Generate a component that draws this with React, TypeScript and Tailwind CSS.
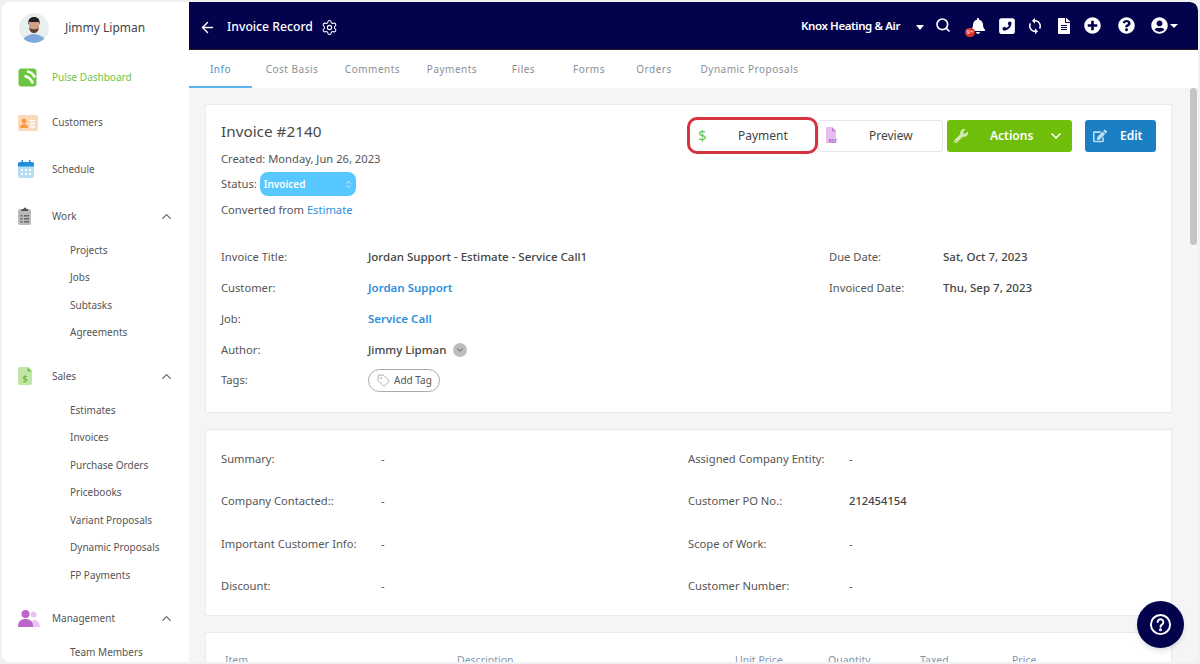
import { ArrowLeft, ChevronDown, ChevronUp, ChevronsUpDown, Search, Settings, Tag } from 'lucide-react';
import { FaBell, FaEdit, FaFileAlt, FaPlusCircle, FaQuestionCircle, FaUserCircle, FaWrench } from 'react-icons/fa';
import { FaSquarePhoneFlip } from 'react-icons/fa6';
import { MdLoop } from 'react-icons/md';

const TABS: [string, string][] = [
  ['Info', 'w-[63px]'],
  ['Cost Basis', 'w-[80px]'],
  ['Comments', 'w-[81px]'],
  ['Payments', 'w-[78px]'],
  ['Files', 'w-[65px]'],
  ['Forms', 'w-[66px]'],
  ['Orders', 'w-[64px]'],
  ['Dynamic Proposals', 'w-[127px]'],
];

function Avatar() {
  return (
    <svg width="30" height="30" viewBox="0 0 30 30" className="shrink-0 rounded-full">
      <circle cx="15" cy="15" r="15" fill="#e9eeee" />
      <path d="M3 31c1-8 6-9 12-10 6 1 11 2 12 10z" fill="#7fa9dc" />
      <ellipse cx="15" cy="13" rx="5" ry="6.500" fill="#d0a080" />
      <path d="M9.500 12c-1-6 2-8 5.500-8s6.500 2 5.500 8l-1-3c-3 0-6 0-9 0z" fill="#222" />
      <path d="M10 14c.5 4 2 6 5 6s4.500-2 5-6l-1 1.500c-2 1-6 1-8 0z" fill="#5a4030" />
    </svg>
  );
}

function PulseIcon() {
  return (
    <svg width="19" height="19" viewBox="0 0 19 19" fill="none">
      <rect width="18" height="18" x="0.500" y="0.500" rx="3" fill="#6cc644" />
      <path d="M9 3.500c3.500 0 6 2.500 8 6" stroke="#fff" strokeWidth="2.500" />
      <path d="M6.500 8c3.500.5 6.500 3 8.500 7.500" stroke="#fff" strokeWidth="2.500" />
    </svg>
  );
}

function CustomersIcon() {
  return (
    <svg width="20" height="16" viewBox="0 0 20 16">
      <rect width="20" height="16" rx="2" fill="#fcd9b8" />
      <circle cx="6" cy="6" r="2.500" fill="#f79a3e" />
      <path d="M2 13c0-3 2-4 4-4s4 1 4 4z" fill="#f79a3e" />
      <path d="M12 5h5v1.500h-5zM12 8h5v1.500h-5zM12 11h5v1.500h-5z" fill="#fff" />
    </svg>
  );
}

function ScheduleIcon() {
  return (
    <svg width="16" height="18" viewBox="0 0 16 18">
      <rect y="2" width="16" height="16" rx="2" fill="#b5def7" />
      <path d="M2 2h12a2 2 0 0 1 2 2v2.500H0V4a2 2 0 0 1 2-2z" fill="#1f8fdc" />
      <path d="M3.500 0h1.500v3H3.500zM11 0h1.500v3H11z" fill="#1f8fdc" />
      <path d="M3 9h2v2H3zM7 9h2v2H7zM11 9h2v2h-2zM3 13h2v2H3zM7 13h2v2H7zM11 13h2v2h-2z" fill="#fff" />
    </svg>
  );
}

function WorkIcon() {
  return (
    <svg width="14" height="18" viewBox="0 0 14 18">
      <rect y="2" width="13" height="16" rx="2" fill="#b9b9b9" />
      <path d="M3.500 4V2h2a1.500 1.500 0 0 1 3 0h1.500v2z" fill="#555" />
      <path d="M2.500 8h2v1.500h-2zM6 8h5v1.500H6zM2.500 11h2v1.500h-2zM6 11h5v1.500H6zM2.500 14h2v1.500h-2zM6 14h5v1.500H6z" fill="#666" />
    </svg>
  );
}

function SalesIcon() {
  return (
    <svg width="14" height="18" viewBox="0 0 14 18">
      <path d="M2 0h8l4 4.500V16a2 2 0 0 1-2 2H2a2 2 0 0 1-2-2V2a2 2 0 0 1 2-2z" fill="#bfe6a5" />
      <path d="M9.500 0 14 4.500H9.500z" fill="#6cc644" />
      <text x="7" y="15" textAnchor="middle" fontSize="9" fill="#4da82b" fontFamily="Noto Sans, sans-serif">$</text>
    </svg>
  );
}

function ManagementIcon() {
  return (
    <svg width="22" height="17" viewBox="0 0 22 17">
      <circle cx="15.500" cy="4.500" r="3" fill="#e6c6ec" />
      <path d="M12 17c0-5 2-7 4.500-7s5 2 5.500 7z" fill="#e6c6ec" />
      <circle cx="7.500" cy="4" r="4" fill="#bb66c8" />
      <path d="M0 17c0-6 3-8 7.500-8s7.500 2 7.500 8z" fill="#bb66c8" />
    </svg>
  );
}

function PdfIcon() {
  return (
    <svg width="15" height="17" viewBox="0 0 15 17">
      <path d="M1 0h6l4 4.500V16H1z" fill="#e7bdf0" />
      <path d="M7 0l4 4.500H7z" fill="#c77dd6" />
      <text x="3.500" y="15.500" fontSize="4.500" fontWeight="700" fill="#b565c7" fontFamily="Noto Sans, sans-serif">PDF</text>
    </svg>
  );
}

function NavItem({ icon, label, h, active, open }: { icon: React.ReactNode; label: string; h: string; active?: boolean; open?: boolean }) {
  return (
    <div className={`flex items-center pl-[16px] pr-[15px] ${h}`}>
      <div className="flex w-[34px] shrink-0 items-center">{icon}</div>
      <span className={`text-[10px] ${active ? 'text-[#6cc644]' : 'text-[#555]'}`}>{label}</span>
      {open && <ChevronUp size={15} className="ml-auto text-[#666]" />}
    </div>
  );
}

function SubItem({ label }: { label: string }) {
  return <div className="flex h-[27.500px] items-center pl-[68px] text-[10px] text-[#555]">{label}</div>;
}

function Sidebar() {
  return (
    <aside className="w-[187px] shrink-0 overflow-hidden bg-white">
      <div className="flex h-[52px] items-center gap-[16px] pl-[17px] text-[12px] text-[#444]">
        <Avatar />
        Jimmy Lipman
      </div>
      <NavItem icon={<PulseIcon />} label="Pulse Dashboard" h="h-[46px]" active />
      <NavItem icon={<CustomersIcon />} label="Customers" h="h-[45px]" />
      <NavItem icon={<ScheduleIcon />} label="Schedule" h="h-[48px]" />
      <NavItem icon={<WorkIcon />} label="Work" h="h-[31px] mt-[7.500px]" open />
      <div className="pt-[5px]">
        {['Projects', 'Jobs', 'Subtasks', 'Agreements'].map((s) => (
          <SubItem key={s} label={s} />
        ))}
      </div>
      <NavItem icon={<SalesIcon />} label="Sales" h="h-[31px] mt-[14px]" open />
      <div className="pt-[5px]">
        {['Estimates', 'Invoices', 'Purchase Orders', 'Pricebooks', 'Variant Proposals', 'Dynamic Proposals', 'FP Payments'].map((s) => (
          <SubItem key={s} label={s} />
        ))}
      </div>
      <NavItem icon={<ManagementIcon />} label="Management" h="h-[31px] mt-[13.500px]" open />
      <div className="pt-[5px]">
        <SubItem label="Team Members" />
      </div>
    </aside>
  );
}

function TopBar() {
  return (
    <header className="flex h-[48px] shrink-0 items-center rounded-tr-lg border-b border-[#222] bg-[#02024d] pl-[10px] pt-[2px] text-white">
      <ArrowLeft size={17} strokeWidth={2} className="mt-[1px]" />
      <span className="ml-[11px] mt-[1px] text-[12.200px] font-medium">Invoice Record</span>
      <Settings size={17} strokeWidth={1.500} className="ml-[8px] mt-[1px]" />
      <span className="ml-auto -mt-[2px] text-[11.500px] font-semibold tracking-[-0.4px]">Knox Heating &amp; Air</span>
      <span className="ml-[16px] mt-[2px] h-0 w-0 border-x-[4.500px] border-t-[5px] border-x-transparent border-t-white" />
      <Search size={16} strokeWidth={2.500} className="ml-[11px] -mt-[4px]" />
      <div className="relative ml-[19px] -mt-[2px]">
        <FaBell size={16} />
        <span className="absolute -bottom-[3px] -left-[5px] flex h-[9px] w-[10px] items-center justify-center rounded-full bg-[#d9342b] text-[6px] leading-none">9+</span>
      </div>
      <FaSquarePhoneFlip size={18} className="ml-[12px] -mt-[2px]" />
      <MdLoop size={18} className="ml-[10px] -mt-[2px]" />
      <FaFileAlt size={16} className="ml-[12px] -mt-[2px]" />
      <FaPlusCircle size={17} className="ml-[12px] -mt-[2px]" />
      <FaQuestionCircle size={17} className="ml-[17px] -mt-[2px]" />
      <FaUserCircle size={17} className="ml-[16px] -mt-[2px]" />
      <span className="ml-[2px] mr-[20px] -mt-[2px] h-0 w-0 border-x-[4px] border-t-[4px] border-x-transparent border-t-white" />
    </header>
  );
}

function Tabs() {
  return (
    <nav className="flex h-[38px] shrink-0 bg-white text-[10px] tracking-[0.5px] text-[#8a8f95]">
      {TABS.map(([t, w], i) => (
        <div
          key={t}
          className={`flex items-center justify-center border-b-[2px] pt-[2px] ${w} ${i === 0 ? 'border-[#5ab4ec] text-[#4a90c8]' : 'border-transparent'}`}
        >
          {t}
        </div>
      ))}
    </nav>
  );
}

function DetailRow({ label, value, link, w = 'w-[147px]' }: { label: string; value: React.ReactNode; link?: boolean; w?: string }) {
  return (
    <div className="flex h-[31px] items-center text-[11.200px]">
      <span className={`${w} shrink-0 text-[#555]`}>{label}</span>
      <span className={`text-[11.500px] font-medium ${link ? 'font-semibold text-[#2f8fdc]' : 'text-[#444]'}`}>{value}</span>
    </div>
  );
}

function InfoRow({ label, value, w }: { label: string; value: string; w: string }) {
  return (
    <div className="flex h-[42.500px] items-center text-[11.200px] text-[#555]">
      <span className={`${w} shrink-0`}>{label}</span>
      <span className={value === '-' ? '' : 'font-medium text-[#444]'}>{value}</span>
    </div>
  );
}

function InvoiceHeader() {
  return (
    <div className="flex h-[100px] items-start justify-between">
      <div className="text-[11.200px] text-[#555]">
        <div className="text-[15.300px] leading-[22px] text-[#4a4a4a]">Invoice #2140</div>
        <div className="mt-[7px] leading-[20px]">Created: Monday, Jun 26, 2023</div>
        <div className="mt-[3px] flex items-center gap-[3px] leading-[20px]">
          Status:
          <div className="flex h-[24px] w-[96px] items-center justify-between rounded-[8px] bg-[#56c8ff] pl-[4px] pr-[3px] text-[10px] font-semibold text-white">
            Invoiced
            <ChevronsUpDown size={9} />
          </div>
        </div>
        <div className="mt-[4px] leading-[20px]">
          Converted from <span className="text-[#2f8fdc]">Estimate</span>
        </div>
      </div>
      <div className="-mt-[3px] flex items-center text-[12px]">
        <button className="flex h-[37px] w-[131px] items-center rounded-[10px] border-[3px] border-[#d4333f] bg-white pl-[8px] text-[#444]">
          <span className="w-[32px] text-left text-[15px] leading-none text-[#6cc644]">$</span>
          <span className="ml-[8px]">Payment</span>
        </button>
        <button className="flex h-[32px] w-[125px] items-center rounded-[3px] border border-[#e4e6e9] bg-white pl-[6px] text-[#444]">
          <PdfIcon />
          <span className="ml-[29px]">Preview</span>
        </button>
        <button className="ml-[4px] flex h-[32px] w-[125px] items-center rounded-[3px] bg-[#6fbf0a] pl-[7px] pr-[8px] font-semibold text-white">
          <FaWrench size={14} className="text-[#d3ecb4]" />
          <span className="ml-[22px]">Actions</span>
          <ChevronDown size={16} strokeWidth={2.500} className="ml-auto" />
        </button>
        <button className="ml-[13px] flex h-[32px] w-[71px] items-center rounded-[3px] bg-[#1b7fc4] pl-[8px] font-semibold text-white">
          <FaEdit size={14} className="text-[#bcdcf2]" />
          <span className="ml-[13px]">Edit</span>
        </button>
      </div>
    </div>
  );
}

function InvoiceDetails() {
  return (
    <div className="mt-[21.500px] flex">
      <div className="w-[608px]">
        <DetailRow label="Invoice Title:" value="Jordan Support - Estimate - Service Call1" />
        <DetailRow label="Customer:" value="Jordan Support" link />
        <DetailRow label="Job:" value="Service Call" link />
        <DetailRow
          label="Author:"
          value={
            <span className="flex items-center gap-[7px]">
              Jimmy Lipman
              <span className="flex h-[14px] w-[14px] items-center justify-center rounded-full bg-[#bdbdbd]">
                <ChevronDown size={10} className="text-[#444]" />
              </span>
            </span>
          }
        />
        <div className="-mt-[1px] flex h-[31px] items-center text-[11.200px] text-[#555]">
          <span className="w-[147px] shrink-0">Tags:</span>
          <span className="flex h-[23px] w-[72px] items-center gap-[4px] rounded-full border border-[#aaa] pl-[8px] text-[10px]">
            <Tag size={13} strokeWidth={1.250} className="text-[#888]" />
            Add Tag
          </span>
        </div>
      </div>
      <div>
        <DetailRow label="Due Date:" value="Sat, Oct 7, 2023" w="w-[114px]" />
        <DetailRow label="Invoiced Date:" value="Thu, Sep 7, 2023" w="w-[114px]" />
      </div>
    </div>
  );
}

function SummaryCard() {
  return (
    <section className="mt-[16px] flex h-[187px] shrink-0 border border-[#e8eaed] bg-white px-[15px] pt-[8px]">
      <div className="w-[467px]">
        <InfoRow label="Summary:" value="-" w="w-[160px]" />
        <InfoRow label="Company Contacted::" value="-" w="w-[160px]" />
        <InfoRow label="Important Customer Info:" value="-" w="w-[160px]" />
        <InfoRow label="Discount:" value="-" w="w-[160px]" />
      </div>
      <div>
        <InfoRow label="Assigned Company Entity:" value="-" w="w-[161px]" />
        <InfoRow label="Customer PO No.:" value="212454154" w="w-[161px]" />
        <InfoRow label="Scope of Work:" value="-" w="w-[161px]" />
        <InfoRow label="Customer Number:" value="-" w="w-[161px]" />
      </div>
    </section>
  );
}

function ItemsCard() {
  const cols: [string, string][] = [
    ['Item', 'w-[232px]'],
    ['Description', 'w-[278px]'],
    ['Unit Price', 'w-[93px]'],
    ['Quantity', 'w-[92px]'],
    ['Taxed', 'w-[92px]'],
    ['Price', 'w-[80px]'],
  ];
  return (
    <section className="mt-[16px] h-[60px] shrink-0 border border-[#e8eaed] bg-white pl-[19px] pt-[20px]">
      <div className="flex text-[10.500px] text-[#8595ad]">
        {cols.map(([c, w]) => (
          <span key={c} className={w}>
            {c}
          </span>
        ))}
      </div>
    </section>
  );
}

export default function App() {
  return (
    <div className="h-[664px] w-[1200px] overflow-hidden bg-[#f0f1f3] p-[2px]" style={{ fontFamily: '"Noto Sans", sans-serif' }}>
      <div className="relative flex h-[660px] overflow-hidden rounded-lg bg-white">
        <Sidebar />
        <main className="flex min-w-0 flex-1 flex-col bg-[#f4f5f7]">
          <TopBar />
          <Tabs />
          <div className="flex min-h-0 flex-1">
            <div className="flex min-w-0 flex-1 flex-col overflow-hidden pl-[16px] pr-[18px] pt-[16px]">
              <section className="h-[309px] shrink-0 border border-[#e8eaed] bg-white px-[15px] pt-[15px]">
                <InvoiceHeader />
                <InvoiceDetails />
              </section>
              <SummaryCard />
              <ItemsCard />
            </div>
            <div className="w-[8px] shrink-0 bg-[#f4f5f7]">
              <div className="h-[157px] w-[7px] rounded-full bg-[#c4c5c7]" />
            </div>
          </div>
        </main>
        <button className="absolute bottom-[14px] right-[14px] flex h-[47px] w-[47px] items-center justify-center rounded-full bg-[#02024d] text-white shadow-md">
          <svg width="23" height="23" viewBox="0 0 24 24" fill="none" stroke="currentColor" strokeWidth="2">
            <circle cx="12" cy="12" r="10" />
            <path d="M9 9.500a3 3 0 1 1 4.500 2.600c-1 .6-1.500 1.200-1.500 2.400" strokeLinecap="round" />
            <circle cx="12" cy="17.500" r="0.600" fill="currentColor" />
          </svg>
        </button>
      </div>
    </div>
  );
}
